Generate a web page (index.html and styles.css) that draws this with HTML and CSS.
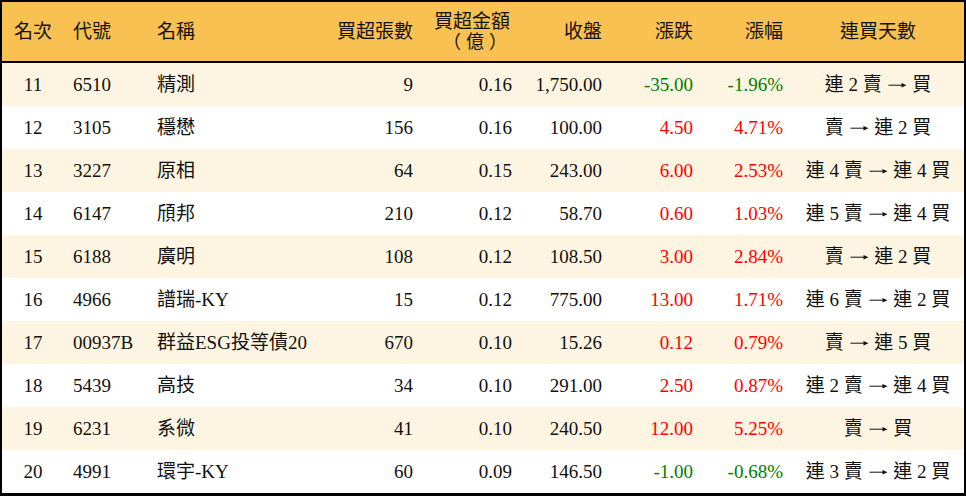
FILE: index.html
```html
<!DOCTYPE html>
<html lang="zh-Hant">
<head>
<meta charset="utf-8">
<title>買超排行</title>
<link rel="stylesheet" href="styles.css">
</head>
<body>
<div class="board">
  <div class="row head">
    <div class="c center">名次</div>
    <div class="c left">代號</div>
    <div class="c left">名稱</div>
    <div class="c right">買超張數</div>
    <div class="c right"><span class="two"><span class="line">買超金額</span><span class="line paren">（億）</span></span></div>
    <div class="c right">收盤</div>
    <div class="c right">漲跌</div>
    <div class="c right">漲幅</div>
    <div class="c center">連買天數</div>
  </div>

  <div class="row odd">
    <div class="c center">11</div><div class="c left">6510</div><div class="c left">精測</div>
    <div class="c right">9</div><div class="c right">0.16</div><div class="c right">1,750.00</div>
    <div class="c right down">-35.00</div><div class="c right down">-1.96%</div>
    <div class="c center">連 2 賣 <svg class="arr" viewBox="0 0 19 10"><path d="M0.5 5.2H15"/><path class="hd" d="M18.5 5.2L13.5 3V7.4Z"/></svg> 買</div>
  </div>
  <div class="row">
    <div class="c center">12</div><div class="c left">3105</div><div class="c left">穩懋</div>
    <div class="c right">156</div><div class="c right">0.16</div><div class="c right">100.00</div>
    <div class="c right up">4.50</div><div class="c right up">4.71%</div>
    <div class="c center">賣 <svg class="arr" viewBox="0 0 19 10"><path d="M0.5 5.2H15"/><path class="hd" d="M18.5 5.2L13.5 3V7.4Z"/></svg> 連 2 買</div>
  </div>
  <div class="row odd">
    <div class="c center">13</div><div class="c left">3227</div><div class="c left">原相</div>
    <div class="c right">64</div><div class="c right">0.15</div><div class="c right">243.00</div>
    <div class="c right up">6.00</div><div class="c right up">2.53%</div>
    <div class="c center">連 4 賣 <svg class="arr" viewBox="0 0 19 10"><path d="M0.5 5.2H15"/><path class="hd" d="M18.5 5.2L13.5 3V7.4Z"/></svg> 連 4 買</div>
  </div>
  <div class="row">
    <div class="c center">14</div><div class="c left">6147</div><div class="c left">頎邦</div>
    <div class="c right">210</div><div class="c right">0.12</div><div class="c right">58.70</div>
    <div class="c right up">0.60</div><div class="c right up">1.03%</div>
    <div class="c center">連 5 賣 <svg class="arr" viewBox="0 0 19 10"><path d="M0.5 5.2H15"/><path class="hd" d="M18.5 5.2L13.5 3V7.4Z"/></svg> 連 4 買</div>
  </div>
  <div class="row odd">
    <div class="c center">15</div><div class="c left">6188</div><div class="c left">廣明</div>
    <div class="c right">108</div><div class="c right">0.12</div><div class="c right">108.50</div>
    <div class="c right up">3.00</div><div class="c right up">2.84%</div>
    <div class="c center">賣 <svg class="arr" viewBox="0 0 19 10"><path d="M0.5 5.2H15"/><path class="hd" d="M18.5 5.2L13.5 3V7.4Z"/></svg> 連 2 買</div>
  </div>
  <div class="row">
    <div class="c center">16</div><div class="c left">4966</div><div class="c left">譜瑞-KY</div>
    <div class="c right">15</div><div class="c right">0.12</div><div class="c right">775.00</div>
    <div class="c right up">13.00</div><div class="c right up">1.71%</div>
    <div class="c center">連 6 賣 <svg class="arr" viewBox="0 0 19 10"><path d="M0.5 5.2H15"/><path class="hd" d="M18.5 5.2L13.5 3V7.4Z"/></svg> 連 2 買</div>
  </div>
  <div class="row odd">
    <div class="c center">17</div><div class="c left">00937B</div><div class="c left">群益ESG投等債20</div>
    <div class="c right">670</div><div class="c right">0.10</div><div class="c right">15.26</div>
    <div class="c right up">0.12</div><div class="c right up">0.79%</div>
    <div class="c center">賣 <svg class="arr" viewBox="0 0 19 10"><path d="M0.5 5.2H15"/><path class="hd" d="M18.5 5.2L13.5 3V7.4Z"/></svg> 連 5 買</div>
  </div>
  <div class="row">
    <div class="c center">18</div><div class="c left">5439</div><div class="c left">高技</div>
    <div class="c right">34</div><div class="c right">0.10</div><div class="c right">291.00</div>
    <div class="c right up">2.50</div><div class="c right up">0.87%</div>
    <div class="c center">連 2 賣 <svg class="arr" viewBox="0 0 19 10"><path d="M0.5 5.2H15"/><path class="hd" d="M18.5 5.2L13.5 3V7.4Z"/></svg> 連 4 買</div>
  </div>
  <div class="row odd">
    <div class="c center">19</div><div class="c left">6231</div><div class="c left">系微</div>
    <div class="c right">41</div><div class="c right">0.10</div><div class="c right">240.50</div>
    <div class="c right up">12.00</div><div class="c right up">5.25%</div>
    <div class="c center">賣 <svg class="arr" viewBox="0 0 19 10"><path d="M0.5 5.2H15"/><path class="hd" d="M18.5 5.2L13.5 3V7.4Z"/></svg> 買</div>
  </div>
  <div class="row">
    <div class="c center">20</div><div class="c left">4991</div><div class="c left">環宇-KY</div>
    <div class="c right">60</div><div class="c right">0.09</div><div class="c right">146.50</div>
    <div class="c right down">-1.00</div><div class="c right down">-0.68%</div>
    <div class="c center">連 3 賣 <svg class="arr" viewBox="0 0 19 10"><path d="M0.5 5.2H15"/><path class="hd" d="M18.5 5.2L13.5 3V7.4Z"/></svg> 連 2 買</div>
  </div>
</div>
</body>
</html>
```

FILE: styles.css
```css
* { box-sizing: border-box; }
html, body { margin: 0; padding: 0; background: #ffffff; }
body {
  font-family: "Liberation Serif", "Noto Sans CJK TC", serif;
  font-size: 19px;
  color: #111111;
}
.board {
  width: 966px;
  border: 2px solid #000000;
  border-bottom-width: 3px;
}
.row {
  display: grid;
  grid-template-columns: 62px 84px 152px 122px 99px 90px 91px 90px 172px;
  height: 43px;
  align-items: center;
  background: #ffffff;
}
.row.odd { background: #fdf5e1; }
.row.head {
  height: 61px;
  background: #f8c151;
  border-bottom: 2px solid #000000;
}
.c {
  padding: 0 9px;
  white-space: nowrap;
  line-height: 22px;
}
.center { text-align: center; padding: 0; }
.left { text-align: left; }
.right { text-align: right; }
.two {
  display: inline-flex;
  flex-direction: column;
  align-items: center;
}
.line {
  display: block;
  height: 20px;
  line-height: 20px;
}
.paren {
  font-size: 18px;
  letter-spacing: 5px;
  padding-left: 11px;
}
.arr {
  width: 19px;
  height: 10px;
  vertical-align: 1px;
  margin: 0 1px;
}
.arr path {
  stroke: #111111;
  stroke-width: 1;
  fill: none;
}
.arr path.hd {
  stroke: none;
  fill: #111111;
}
.up { color: #ff0000; }
.down { color: #008000; }
```
